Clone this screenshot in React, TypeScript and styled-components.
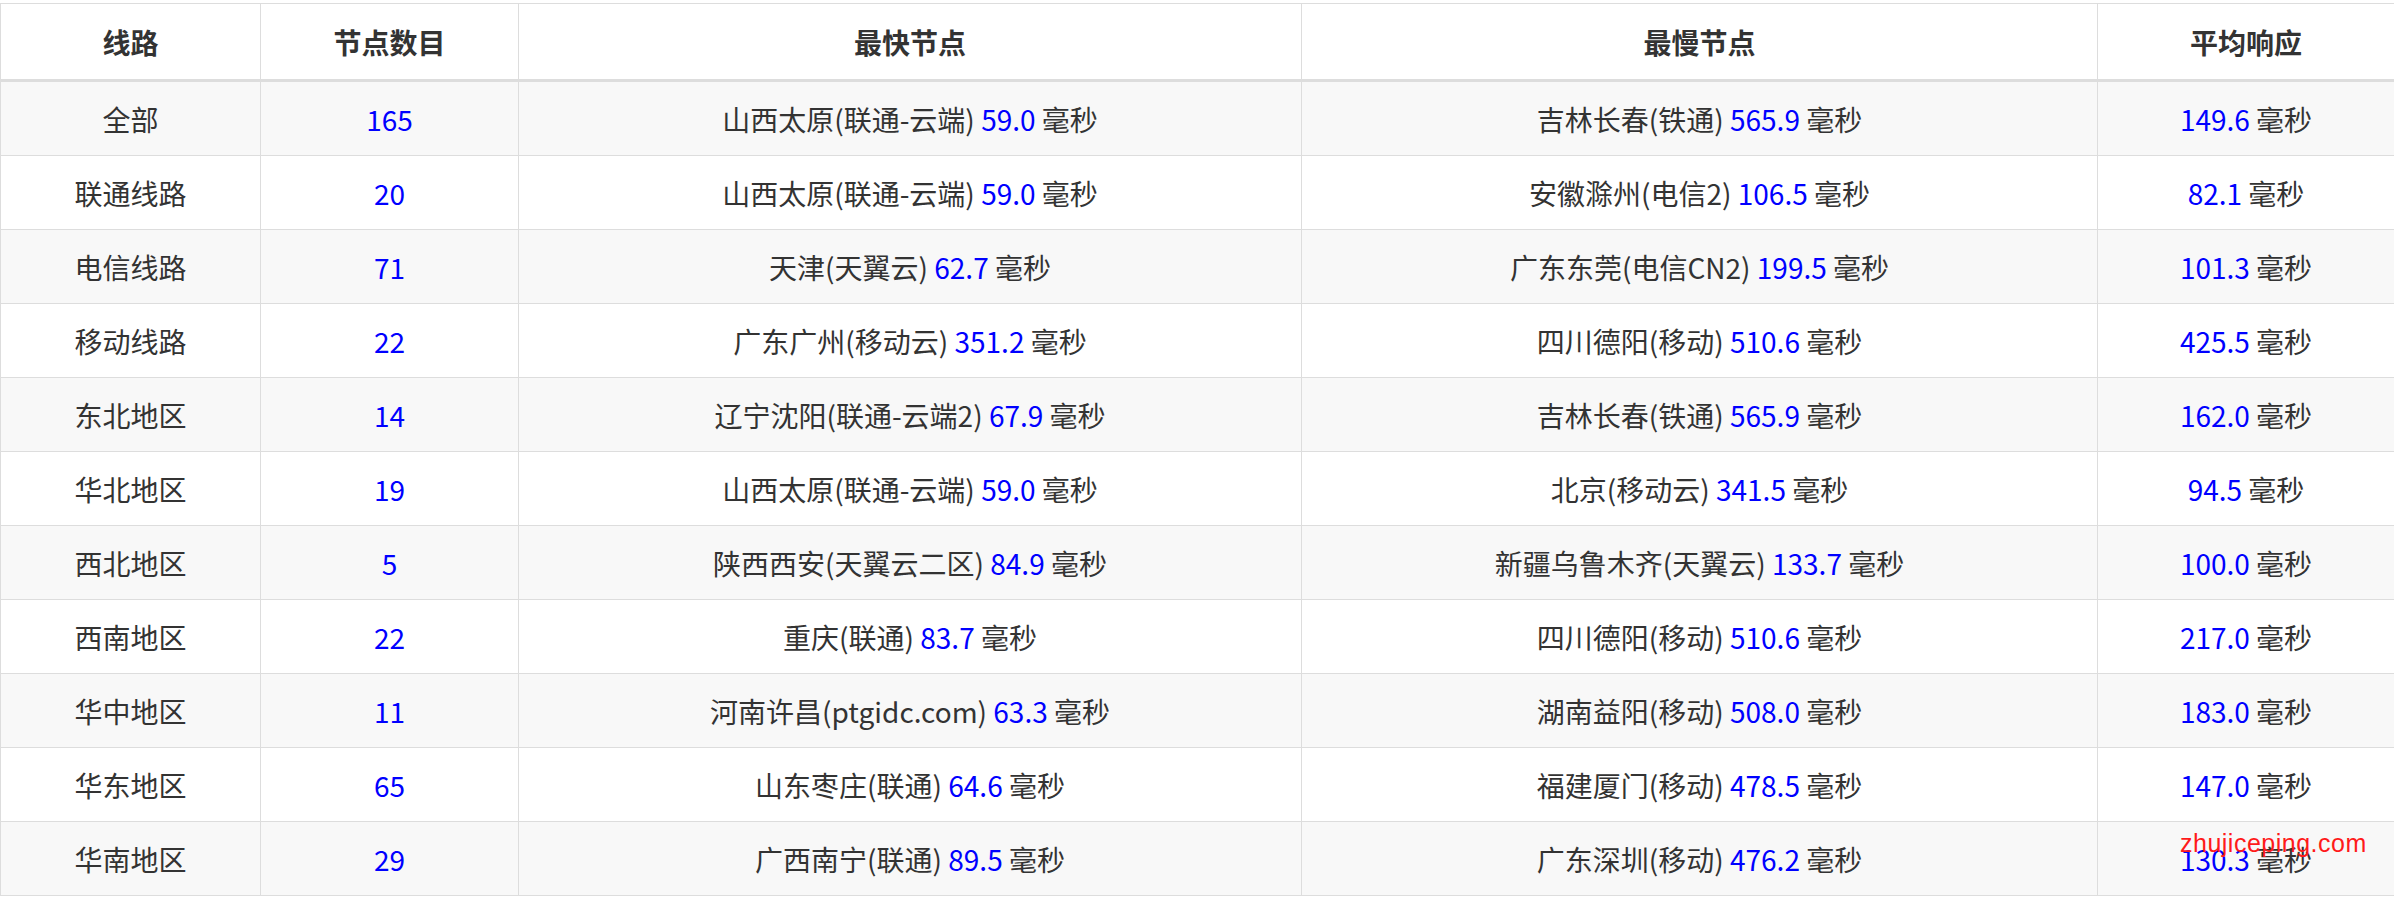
import styled, { createGlobalStyle } from 'styled-components';

const GlobalStyle = createGlobalStyle`
  body {
    margin: 0;
    padding-top: 3px;
    background: #fff;
    font-family: "Noto Sans CJK SC", "Noto Sans", sans-serif;
  }
`;

type Row = [string, string, string, string, string, string, string];

const rows: Row[] = [
  ['全部', '165', '山西太原(联通-云端)', '59.0', '吉林长春(铁通)', '565.9', '149.6'],
  ['联通线路', '20', '山西太原(联通-云端)', '59.0', '安徽滁州(电信2)', '106.5', '82.1'],
  ['电信线路', '71', '天津(天翼云)', '62.7', '广东东莞(电信CN2)', '199.5', '101.3'],
  ['移动线路', '22', '广东广州(移动云)', '351.2', '四川德阳(移动)', '510.6', '425.5'],
  ['东北地区', '14', '辽宁沈阳(联通-云端2)', '67.9', '吉林长春(铁通)', '565.9', '162.0'],
  ['华北地区', '19', '山西太原(联通-云端)', '59.0', '北京(移动云)', '341.5', '94.5'],
  ['西北地区', '5', '陕西西安(天翼云二区)', '84.9', '新疆乌鲁木齐(天翼云)', '133.7', '100.0'],
  ['西南地区', '22', '重庆(联通)', '83.7', '四川德阳(移动)', '510.6', '217.0'],
  ['华中地区', '11', '河南许昌(ptgidc.com)', '63.3', '湖南益阳(移动)', '508.0', '183.0'],
  ['华东地区', '65', '山东枣庄(联通)', '64.6', '福建厦门(移动)', '478.5', '147.0'],
  ['华南地区', '29', '广西南宁(联通)', '89.5', '广东深圳(移动)', '476.2', '130.3'],
];

const Wrap = styled.div`
  position: relative;
`;

const Table = styled.table`
  width: 2394px;
  border-collapse: collapse;
  table-layout: fixed;
  color: #333;
  font-size: 28px;
`;

const Th = styled.th`
  height: 73px;
  border: 1px solid #ddd;
  border-bottom: 3px solid #ddd;
  font-weight: bold;
  text-align: center;
`;

const Tr = styled.tr<{ $striped: boolean }>`
  background: ${p => (p.$striped ? '#f8f8f8' : '#fff')};
`;

const Td = styled.td`
  height: 73px;
  padding: 0;
  border: 1px solid #ddd;
  text-align: center;
`;

const Num = styled.span`
  color: #0000ff;
`;

const Watermark = styled.div`
  position: absolute;
  left: 2180px;
  top: 826px;
  color: #ff1a1a;
  font-family: "Liberation Sans", sans-serif;
  font-size: 25px;
  letter-spacing: 0.5px;
`;

const Ms = ({ v }: { v: string }) => (
  <>
    <Num>{v}</Num> 毫秒
  </>
);

export default function App() {
  return (
    <Wrap>
      <GlobalStyle />
      <Table>
        <colgroup>
          <col style={{ width: 260 }} />
          <col style={{ width: 258 }} />
          <col style={{ width: 783 }} />
          <col style={{ width: 796 }} />
          <col style={{ width: 297 }} />
        </colgroup>
        <thead>
          <tr>
            <Th>线路</Th>
            <Th>节点数目</Th>
            <Th>最快节点</Th>
            <Th>最慢节点</Th>
            <Th>平均响应</Th>
          </tr>
        </thead>
        <tbody>
          {rows.map((r, i) => (
            <Tr key={r[0]} $striped={i % 2 === 0}>
              <Td>{r[0]}</Td>
              <Td><Num>{r[1]}</Num></Td>
              <Td>{r[2]} <Ms v={r[3]} /></Td>
              <Td>{r[4]} <Ms v={r[5]} /></Td>
              <Td><Ms v={r[6]} /></Td>
            </Tr>
          ))}
        </tbody>
      </Table>
      <Watermark>zhujiceping.com</Watermark>
    </Wrap>
  );
}
